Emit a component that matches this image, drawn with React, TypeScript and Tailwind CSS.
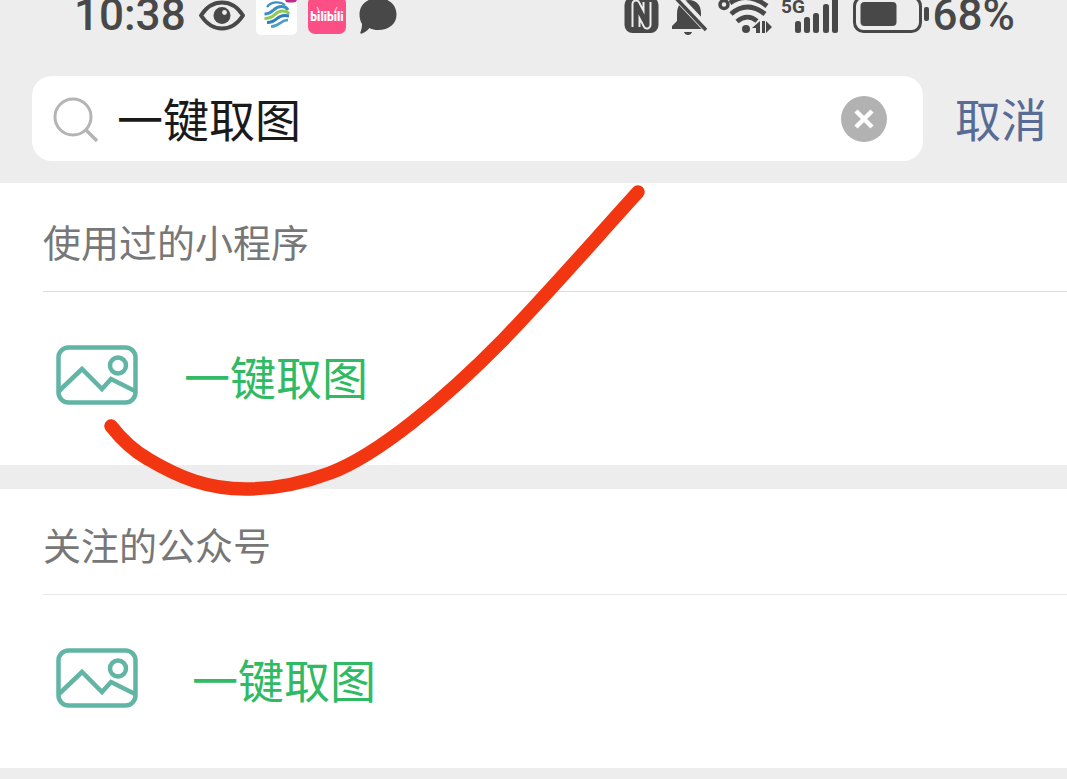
import React, { useState } from "react";

const sections = [
  {
    title: "使用过的小程序",
    name: "一键取图",
    sectionClass: "pt-[3px]",
    gapClass: "gap-[45px]",
    lineClass: "border-[#dcdcdc]",
  },
  {
    title: "关注的公众号",
    name: "一键取图",
    sectionClass: "",
    gapClass: "gap-[53px]",
    lineClass: "border-[#e8e8e8]",
  },
];

const StatusBar = () => {
  return (
    <div className="flex h-9 items-start justify-between overflow-hidden pl-[74px] pr-[52px] font-[Roboto,sans-serif] text-[44px] font-medium leading-[30px] text-[#484848]">
      <div className="flex items-start">
        <span>10:38</span>
        {/* Eye */}
        <svg className="ml-3 h-9 w-12" viewBox="0 0 48 36" fill="none">
          <path d="M3 15.500C9 6 16 2.500 24 2.500S39 6 45 15.500C39 24.500 32 28.500 24 28.500S9 24.500 3 15.500Z" stroke="currentColor" strokeWidth="4" strokeLinejoin="round" />
          <circle cx="24" cy="15.500" r="8.500" fill="currentColor" />
          <circle cx="26.500" cy="12.500" r="2.400" fill="#ededed" />
        </svg>
        {/* Carrier app */}
        <svg className="ml-[10px] h-9 w-[42px]" viewBox="0 0 42 36" fill="none">
          <rect x="0" y="-8" width="41" height="43" rx="5" fill="#fff" />
          <path d="M29 -4H41V-1Q41 2.500 37 2.500H32Q29 2.500 29 -1Z" fill="#c32a8a" />
          <path d="M11 7C15 1.500 24 1 29 5" stroke="#3e8ec4" strokeWidth="2.200" />
          <path d="M8.500 14C18 14 17 6 26 6.500C29 6.500 31 8 32 10" stroke="#3e8ec4" strokeWidth="3" />
          <path d="M8.500 18.500C20 18.500 18 10.500 27 11C30 11 32 12 33 14" stroke="#8fcb52" strokeWidth="3" />
          <path d="M11 22.500C22 22.500 20 15 29 15.500L33 16" stroke="#2f7fba" strokeWidth="3" />
          <path d="M15 26.500C24 26.500 24 20 32 20" stroke="#4c9ccd" strokeWidth="2.600" />
        </svg>
        <svg className="ml-[10px] h-9 w-[38px]" viewBox="0 0 38 36">
          <rect x="0" y="-4" width="38" height="38" rx="7" fill="#fb4f86" />
          <path d="M11 11L9 7M27 11L29 7" stroke="#fff" strokeWidth="1.500" opacity="0.600" />
          <text x="19" y="21" textAnchor="middle" fontSize="12" fontWeight="900" fill="#fff" fontFamily="Roboto, sans-serif">bilibili</text>
        </svg>
        {/* Chat bubble */}
        <svg className="ml-3 h-9 w-10" viewBox="0 0 40 36" fill="currentColor">
          <path d="M20 -2C31 -2 38.500 5 38.500 14.500S31 30 20 30C17 30 14 29.500 11.500 28C9.500 30.500 7 32.500 4 33.500C2.500 34 2 33 2.500 32C3.500 29.500 4 27 4 24C2.500 21.500 1.500 18 1.500 14.500C1.500 5 9 -2 20 -2Z" />
        </svg>
      </div>

      <div className="flex items-start">
        {/* NFC */}
        <svg className="h-9 w-9" viewBox="0 0 36 36" fill="none">
          <rect x="0.500" y="-3" width="34" height="36" rx="8" fill="currentColor" />
          <path d="M12 27V4L23 25V2" stroke="#ededed" strokeWidth="9" strokeLinejoin="round" />
          <path d="M12 30V4L23 25V0" stroke="currentColor" strokeWidth="5" strokeLinejoin="round" />
        </svg>
        {/* Muted bell */}
        <svg className="ml-[11px] h-9 w-10" viewBox="0 0 40 36">
          <path d="M6 14C6 5 11 0 18 0S30 5 30 13V21L33 26V29H1V26L6 21Z" fill="currentColor" />
          <path d="M13 32H21Q20 35 17 35T13 32Z" fill="currentColor" />
          <path d="M4 -5L38 31" stroke="#ededed" strokeWidth="8" />
          <path d="M2 -5L35 30" stroke="currentColor" strokeWidth="3.500" />
        </svg>
        {/* Wi-Fi */}
        <svg className="ml-[7px] h-9 w-14" viewBox="0 0 56 36" fill="none">
          <circle cx="6" cy="4.500" r="4" stroke="currentColor" strokeWidth="3.500" />
          <path d="M12 3Q29 -9 49 6M13 14Q29 0 47 14M19 21.500Q29 13 39 21" stroke="currentColor" strokeWidth="4.800" />
          <circle cx="28" cy="29" r="4" fill="currentColor" />
          <path d="M34 28L42 21V33H38V28ZM44 21H47V33H44ZM48 21L54 27L48 33Z" fill="currentColor" />
        </svg>
        <svg className="ml-[7px] h-9 w-[60px]" viewBox="0 0 60 36" fill="currentColor">
          <text x="0" y="13" fontSize="19" fontWeight="700" fontFamily="Roboto, sans-serif">5G</text>
          <rect x="14" y="21" width="6" height="12" rx="2.500" />
          <rect x="23" y="17" width="6" height="16" rx="2.500" />
          <rect x="32" y="13" width="6" height="20" rx="2.500" />
          <rect x="42" y="4" width="6" height="29" rx="2.500" />
          <rect x="51" y="-4" width="6" height="37" rx="2.500" />
        </svg>
        {/* Battery */}
        <svg className="ml-3 h-9 w-20" viewBox="0 0 80 36" fill="none">
          <rect x="1.500" y="-3" width="66" height="34.500" rx="9" stroke="currentColor" strokeWidth="3" />
          <rect x="7.500" y="2" width="36" height="24" rx="4" fill="currentColor" />
          <rect x="71" y="7" width="5" height="14" rx="2" fill="currentColor" />
        </svg>
        <span>68%</span>
      </div>
    </div>
  );
};

const PictureIcon = () => {
  return (
    <svg className="h-[60px] w-[84px] shrink-0" viewBox="0 0 84 60" fill="none" stroke="#62b5a5" strokeWidth="4.500">
      <rect x="3.500" y="2.500" width="77" height="55" rx="10" />
      <path d="M4 46L27 24L47 44L56 34L80 46" />
      <circle cx="63" cy="20.500" r="8" />
    </svg>
  );
};

const App = () => {
  const [keyword, setKeyword] = useState("一键取图");

  return (
    <div className="relative min-h-screen overflow-hidden bg-[#ededed] font-['Noto_Sans_CJK_SC',sans-serif]">
      <header>
        <StatusBar />
        <form
          className="flex items-center gap-8 pb-[22px] pl-8 pr-5 pt-10"
          onSubmit={(e) => e.preventDefault()}
        >
          <div className="flex h-[85px] min-w-0 flex-1 items-center rounded-[20px] bg-white pl-5 pr-9">
            <svg className="h-12 w-12 shrink-0" viewBox="0 0 48 48" fill="none" stroke="#b4b4b4" strokeWidth="3">
              <circle cx="21" cy="22" r="18" />
              <path d="M33 34L45 46" strokeWidth="3.500" />
            </svg>
            <input
              type="text"
              aria-label="搜索"
              value={keyword}
              onChange={(e) => setKeyword(e.target.value)}
              className="ml-[17px] min-w-0 flex-1 bg-transparent pb-1 text-[46px] leading-[68px] text-[#1a1a1a] outline-none"
            />
            <button type="button" aria-label="清除" onClick={() => setKeyword("")}>
              <svg className="h-[46px] w-[46px]" viewBox="0 0 46 46">
                <circle cx="23" cy="23" r="23" fill="#b2b2b2" />
                <path d="M15 15L31 31M31 15L15 31" stroke="#fff" strokeWidth="4.500" />
              </svg>
            </button>
          </div>
          <button type="button" className="shrink-0 pb-1 text-[46px] leading-[68px] text-[#576b95]">
            取消
          </button>
        </form>
      </header>

      <main className="flex flex-col gap-6">
        {sections.map((section) => (
          <section key={section.title} className={`bg-white ${section.sectionClass}`}>
            <h2 className={`ml-[43px] border-b pb-[22px] pt-[27px] text-[38px] leading-[56px] text-[#777777] ${section.lineClass}`}>
              {section.title}
            </h2>
            <a href="#" className={`flex h-[173px] items-center pb-2 pl-[55px] ${section.gapClass}`}>
              <PictureIcon />
              <span className="text-[46px] leading-[68px] text-[#2fba63]">{section.name}</span>
            </a>
          </section>
        ))}
      </main>

      {/* Hand-drawn mark over the results */}
      <svg
        className="pointer-events-none absolute left-0 top-0 h-[520px] w-[680px]"
        viewBox="0 0 680 520"
        fill="none"
        stroke="#f23611"
        strokeWidth="13.500"
        strokeLinecap="round"
      >
        <path d="M111 426C122 440 132 450 148 459C180 478 208 489 246 489C278 489 306 482 330 473C378 455 445 399 503 340C553 288 597 237 638 192" />
      </svg>
    </div>
  );
};

export default App;
